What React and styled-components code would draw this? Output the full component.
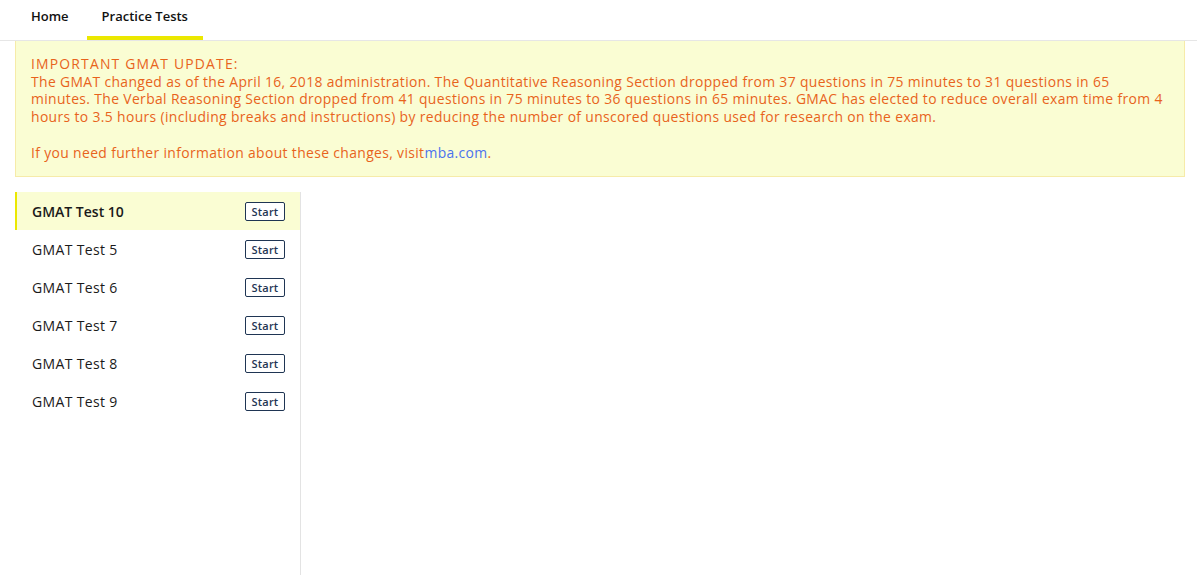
import React from "react";
import styled, { createGlobalStyle } from "styled-components";

const Global = createGlobalStyle`
  html, body { margin: 0; padding: 0; background: #fff; }
  body { font-family: "Open Sans", "Liberation Sans", sans-serif; }
  * { box-sizing: border-box; }
`;

const Page = styled.div`
  display: flex;
  flex-direction: column;
  min-height: 575px;
`;

const Nav = styled.nav`
  display: flex;
  gap: 3px;
  padding-left: 16px;
  height: 41px;
  border-bottom: 1px solid #e6e6e6;
`;

const Tab = styled.a`
  display: flex;
  align-items: center;
  padding: 0 15px 5px;
  height: 40px;
  font-size: 13px;
  font-weight: 600;
  color: #111;
  text-decoration: none;
  border-bottom: 4px solid ${(p) => (p.$active ? "#ebe800" : "transparent")};
`;

const Content = styled.div`
  flex: 1;
  display: flex;
  flex-direction: column;
  padding: 0 12px 0 15px;
`;

const Notice = styled.div`
  background: #fafdd3;
  border: 1px solid #f6eba9;
  border-top: none;
  padding: 14px 15px 15px 15px;
  color: #e8631c;
  font-size: 13.9px;
  line-height: 17.7px;
  letter-spacing: 0.36px;
`;

const NoticeTitle = styled.div`
  letter-spacing: 1.2px;
`;

const NoticePara = styled.p`
  margin: 0 0 17.7px;
  &:last-child { margin-bottom: 0; }
`;

const Link = styled.a`
  color: #4a72ee;
  text-decoration: none;
`;

const Body = styled.div`
  flex: 1;
  display: flex;
  margin-top: 15px;
`;

const Sidebar = styled.ul`
  width: 286px;
  margin: 0;
  padding: 0;
  list-style: none;
  border-right: 1px solid #e3e3e3;
`;

const Row = styled.li`
  display: flex;
  align-items: center;
  justify-content: space-between;
  height: 38px;
  padding: 0 15px 0 15px;
  background: ${(p) => (p.$active ? "#fafdd3" : "transparent")};
  border-left: 2px solid ${(p) => (p.$active ? "#ebe800" : "transparent")};
`;

const RowLabel = styled.span`
  font-size: 14px;
  color: #1a1a1a;
  font-weight: ${(p) => (p.$active ? 600 : 400)};
  letter-spacing: ${(p) => (p.$active ? "0" : "0.35px")};
`;

const StartButton = styled.button`
  font-family: "Open Sans", "Liberation Sans", sans-serif;
  font-size: 11px;
  font-weight: 600;
  letter-spacing: 0.2px;
  color: #1f3553;
  background: #fff;
  border: 1px solid #1f3553;
  border-radius: 2px;
  height: 19px;
  width: 40px;
  padding: 0;
  line-height: 17px;
  cursor: pointer;
`;

const tests = ["GMAT Test 10", "GMAT Test 5", "GMAT Test 6", "GMAT Test 7", "GMAT Test 8", "GMAT Test 9"];

export default function App() {
  return (
    <Page>
      <Global />
      <Nav>
        <Tab href="#">Home</Tab>
        <Tab href="#" $active>Practice Tests</Tab>
      </Nav>
      <Content>
        <Notice>
          <NoticeTitle>IMPORTANT GMAT UPDATE:</NoticeTitle>
          <NoticePara>
            The GMAT changed as of the April 16, 2018 administration. The Quantitative Reasoning Section dropped from 37 questions in 75 minutes to 31 questions in 65 minutes. The Verbal Reasoning Section dropped from 41 questions in 75 minutes to 36 questions in 65 minutes. GMAC has elected to reduce overall exam time from 4 hours to 3.5 hours (including breaks and instructions) by reducing the number of unscored questions used for research on the exam.
          </NoticePara>
          <NoticePara>
            If you need further information about these changes, visit<Link href="#">mba.com</Link>.
          </NoticePara>
        </Notice>
        <Body>
          <Sidebar>
            {tests.map((t, i) => (
              <Row key={t} $active={i === 0}>
                <RowLabel $active={i === 0}>{t}</RowLabel>
                <StartButton>Start</StartButton>
              </Row>
            ))}
          </Sidebar>
        </Body>
      </Content>
    </Page>
  );
}
